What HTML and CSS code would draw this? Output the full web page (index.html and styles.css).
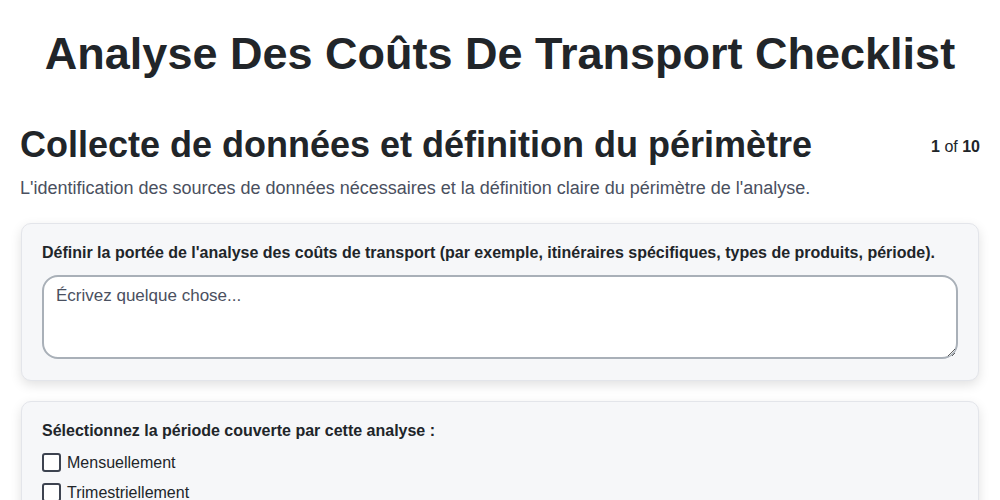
FILE: index.html
```html
<!DOCTYPE html>
<html lang="fr">
<head>
  <meta charset="UTF-8">
  <meta name="viewport" content="width=device-width, initial-scale=1.0">
  <title>Analyse Des Coûts De Transport Checklist</title>
  <link rel="stylesheet" href="styles.css">
</head>
<body>
  <div class="page">
    <h1 class="title">Analyse Des Coûts De Transport Checklist</h1>
    <div class="section-head">
      <h2>Collecte de données et définition du périmètre</h2>
      <div class="step"><b>1</b> of <b>10</b></div>
    </div>
    <p class="section-desc">L'identification des sources de données nécessaires et la définition claire du périmètre de l'analyse.</p>

    <div class="card">
      <label class="question" for="scope">Définir la portée de l'analyse des coûts de transport (par exemple, itinéraires spécifiques, types de produits, période).</label>
      <textarea id="scope" class="answer" placeholder="Écrivez quelque chose..."></textarea>
    </div>

    <div class="card">
      <div class="question">Sélectionnez la période couverte par cette analyse :</div>
      <label class="option"><input type="checkbox"> <span>Mensuellement</span></label>
      <label class="option"><input type="checkbox"> <span>Trimestriellement</span></label>
      <label class="option"><input type="checkbox"> <span>Annuellement</span></label>
    </div>
  </div>
</body>
</html>
```

FILE: styles.css
```css
body {
  margin: 0;
  background: #fff;
  color: #212529;
  font-family: 'Liberation Sans', Arial, sans-serif;
}
.page {
  max-width: 960px;
  margin: 0 auto;
  padding: 0 20px;
}
.title {
  text-align: center;
  font-size: 45px;
  font-weight: bold;
  margin: 28px 0 44px 0;
  color: #212529;
}
.section-head {
  display: flex;
  justify-content: space-between;
  align-items: flex-start;
}
.section-head h2 {
  font-size: 36px;
  margin: 0;
  color: #212529;
}
.step {
  font-size: 16px;
  margin-top: 14px;
  color: #212529;
}
.section-desc {
  font-size: 18px;
  color: #4a5060;
  margin: 12px 0 24px 0;
}
.card {
  background: #f6f7f9;
  border: 1px solid #e3e5ea;
  border-radius: 10px;
  box-shadow: 0 4px 12px rgba(0,0,0,0.12);
  padding: 20px 20px 21px 20px;
  margin: 0 1px 20px 1px;
}
.question {
  display: block;
  font-size: 16px;
  font-weight: bold;
  margin-bottom: 13px;
  color: #212529;
}
.answer {
  display: block;
  box-sizing: border-box;
  width: 100%;
  height: 84px;
  border: 2px solid #a9b0b8;
  border-radius: 16px;
  padding: 9px 12px;
  font-family: inherit;
  font-size: 17px;
  background: #fff;
}
.answer::placeholder {
  color: #4a5060;
}
.option {
  display: flex;
  align-items: center;
  gap: 6px;
  font-size: 16px;
  margin-bottom: 11px;
}
.option input {
  appearance: none;
  width: 19px;
  height: 19px;
  margin: 0;
  border: 2px solid #3d4350;
  border-radius: 3px;
  background: #fff;
}
```
